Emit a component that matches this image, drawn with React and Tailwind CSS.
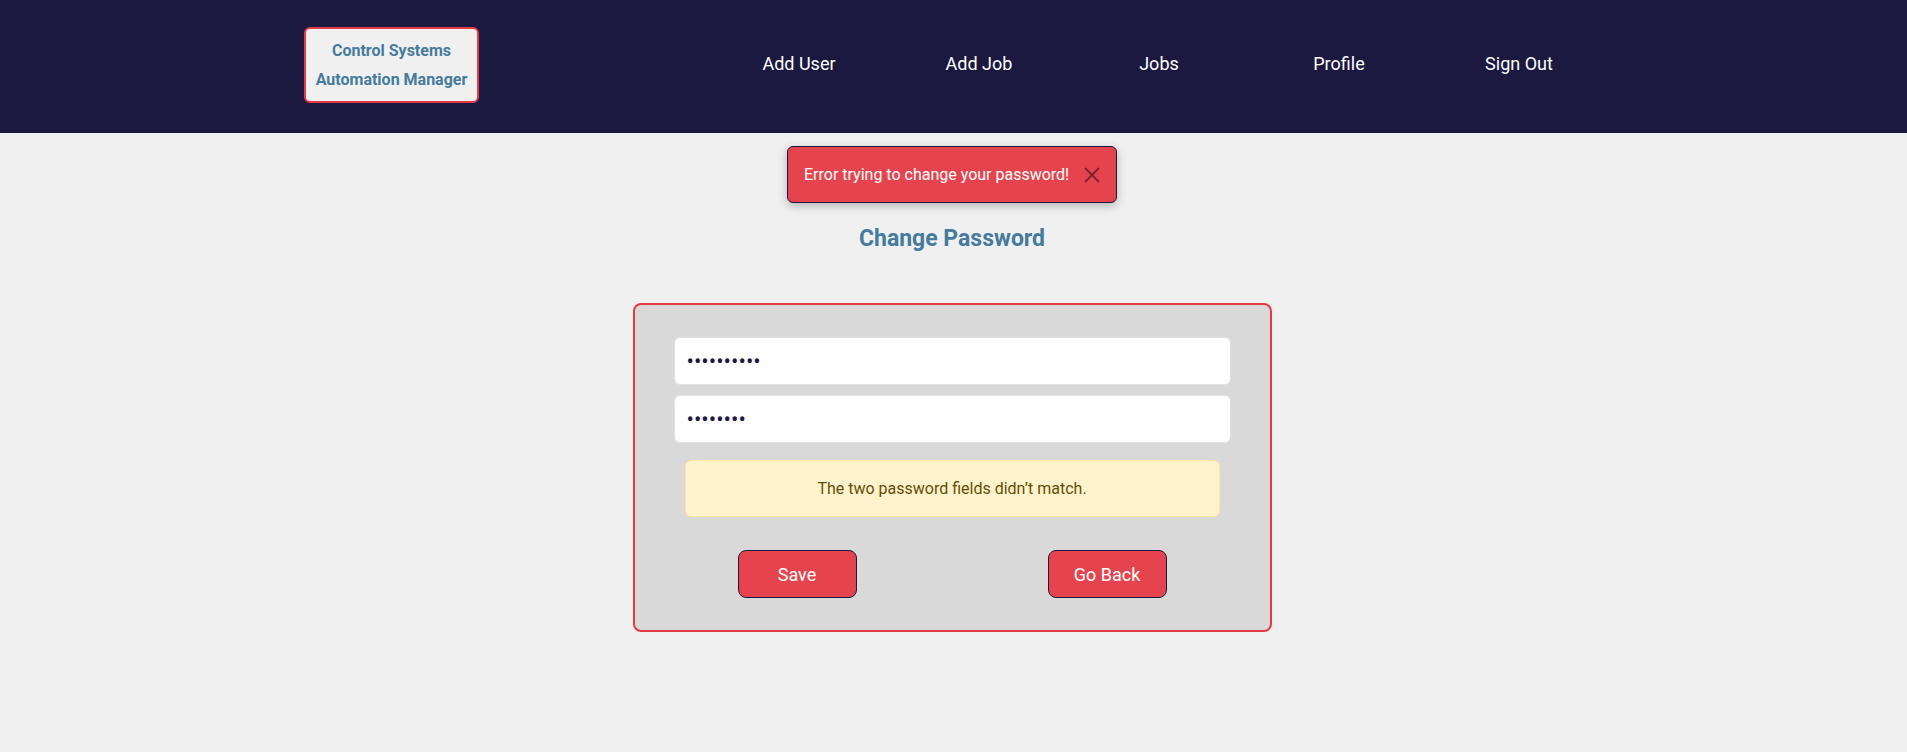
import React from "react";

export default function App() {
  const nav = ["Add User", "Add Job", "Jobs", "Profile", "Sign Out"];
  return (
    <div className="min-h-[752px] bg-[#f0f0f0]" style={{ fontFamily: "Roboto, 'Liberation Sans', sans-serif" }}>
      <header className="h-[133px] bg-[#1b1940] flex items-center pl-[304px]">
        <div className="w-[175px] h-[76px] -mt-[4px] rounded-[6px] border-2 border-[#e63946] bg-[#f0f0f0] flex flex-col items-center justify-center text-[16px] font-bold text-[#457b9d] leading-[29px]">
          <span>Control Systems</span>
          <span>Automation Manager</span>
        </div>
        <nav className="ml-[230px] flex -mt-[5px]">
          {nav.map((n) => (
            <a key={n} className="w-[180px] text-center text-white text-[18px] leading-[24px] cursor-pointer">
              {n}
            </a>
          ))}
        </nav>
      </header>

      <main className="flex flex-col items-center pr-[3px]">
        <div className="mt-[13px] w-[330px] h-[57px] rounded-[6px] border border-[#1b1940] bg-[#e5444e] shadow-[0_3px_10px_rgba(0,0,0,0.25)] flex items-center justify-between pl-[16px] pr-[16px]">
          <span className="text-white text-[16px]">Error trying to change your password!</span>
          <svg width="16" height="16" viewBox="0 0 16 16" className="shrink-0">
            <path d="M1 1L15 15M15 1L1 15" stroke="#7a2230" strokeWidth="1.8" fill="none" />
          </svg>
        </div>

        <h1 className="mt-[21px] h-[30px] leading-[30px] text-[23px] font-bold text-[#457b9d]">Change Password</h1>

        <div className="mt-[49px] w-[639px] rounded-[8px] border-2 border-[#e63946] bg-[#d9d9d9] pt-[32px] pb-[32px] px-[39px] flex flex-col">
          <input
            type="password"
            defaultValue="abcdefghij"
            className="h-[48px] w-full rounded-[6px] border border-[#dee2e6] bg-white px-[12px] text-[22px] text-[#1b1940] outline-none"
          />
          <input
            type="password"
            defaultValue="abcdefgh"
            className="mt-[10px] h-[48px] w-full rounded-[6px] border border-[#dee2e6] bg-white px-[12px] text-[22px] text-[#1b1940] outline-none"
          />
          <div className="mt-[17px] mx-[11px] h-[57px] rounded-[6px] border border-[#ffe69c] bg-[#fff3cd] text-[#664d03] text-[16px] flex items-center justify-center">
            The two password fields didn’t match.
          </div>
          <div className="mt-[33px] flex justify-between px-[64px]">
            <button className="w-[119px] h-[48px] rounded-[8px] border border-[#1b1940] bg-[#e5444e] text-white text-[18px]">
              Save
            </button>
            <button className="w-[119px] h-[48px] rounded-[8px] border border-[#1b1940] bg-[#e5444e] text-white text-[18px]">
              Go Back
            </button>
          </div>
        </div>
      </main>
    </div>
  );
}
